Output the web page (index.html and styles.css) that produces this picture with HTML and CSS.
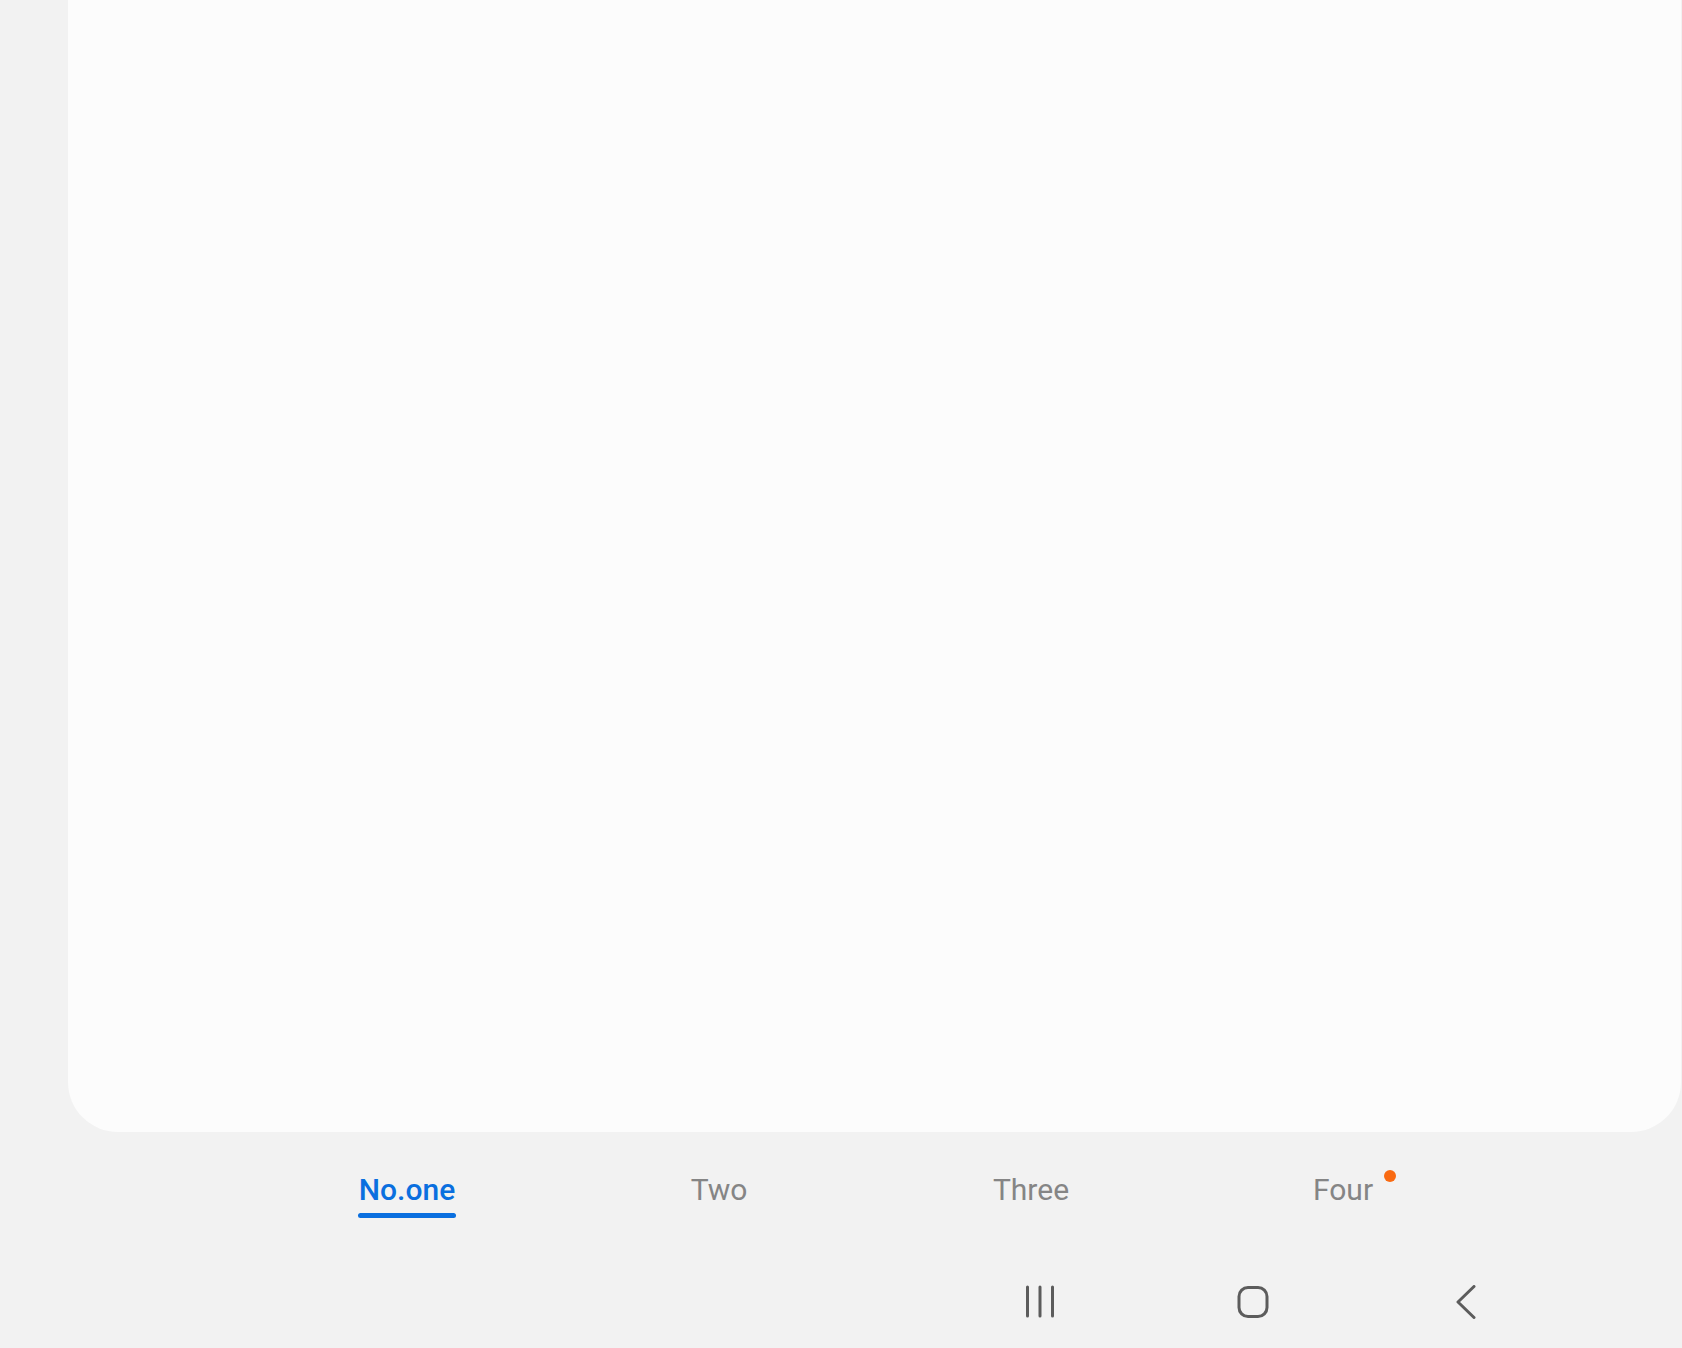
FILE: index.html
```html
<!DOCTYPE html>
<html lang="en">
<head>
<meta charset="utf-8">
<title>Tabs</title>
<link rel="stylesheet" href="styles.css">
</head>
<body>
<div class="screen">
  <main class="card"></main>
  <nav class="tabs">
    <div class="tab active"><span class="tab-label">No.one</span><span class="tab-indicator"></span></div>
    <div class="tab"><span class="tab-label">Two</span></div>
    <div class="tab"><span class="tab-label">Three</span></div>
    <div class="tab"><span class="tab-label badge-host">Four<span class="badge"></span></span></div>
  </nav>
  <div class="navbar">
    <div class="nav-btn">
      <svg width="32" height="34" viewBox="0 0 32 34"><g stroke="#5c5c5c" stroke-width="3" stroke-linecap="round"><line x1="3.5" y1="2" x2="3.5" y2="31"/><line x1="16" y1="2" x2="16" y2="31"/><line x1="28.5" y1="2" x2="28.5" y2="31"/></g></svg>
    </div>
    <div class="nav-btn">
      <svg width="34" height="34" viewBox="0 0 34 34"><rect x="3" y="2.5" width="28" height="29" rx="9" fill="none" stroke="#5c5c5c" stroke-width="3"/></svg>
    </div>
    <div class="nav-btn">
      <svg width="22" height="34" viewBox="0 0 22 34"><polyline points="19,1.5 3,17 19,32.5" fill="none" stroke="#5c5c5c" stroke-width="3" stroke-linecap="round" stroke-linejoin="round"/></svg>
    </div>
  </div>
</div>
</body>
</html>
```

FILE: styles.css
```css
html, body {
  margin: 0;
  padding: 0;
  background: #f2f2f2;
}
body {
  font-family: Roboto, "Noto Sans", "Liberation Sans", sans-serif;
  overflow: hidden;
}
.screen {
  width: 1682px;
  height: 1348px;
  display: flex;
  flex-direction: column;
}
.card {
  margin-left: 68px;
  width: 1613px;
  height: 1132px;
  background: #fcfcfc;
  border-radius: 0 0 50px 50px;
  flex: none;
}
.tabs {
  margin-left: 68px;
  height: 118px;
  display: flex;
  justify-content: center;
  flex: none;
}
.tab {
  width: 312px;
  display: flex;
  flex-direction: column;
  align-items: center;
  padding-top: 40px;
  box-sizing: border-box;
}
.tab-label {
  font-size: 30px;
  line-height: 35px;
  color: #858585;
  position: relative;
}
.tab.active .tab-label {
  color: #0a6fdf;
  font-weight: 500;
}
.tab-indicator {
  display: block;
  width: 98px;
  height: 5px;
  margin-top: 6px;
  border-radius: 3px;
  background: #0a6fdf;
}
.badge {
  position: absolute;
  right: -23px;
  top: -2px;
  width: 12px;
  height: 12px;
  border-radius: 50%;
  background: #f96a12;
}
.navbar {
  flex: 1;
  display: flex;
  justify-content: flex-end;
  align-items: center;
  padding-right: 110px;
  padding-top: 6px;
}
.nav-btn {
  width: 213px;
  display: flex;
  justify-content: center;
  align-items: center;
}
.nav-btn svg {
  display: block;
}
```
